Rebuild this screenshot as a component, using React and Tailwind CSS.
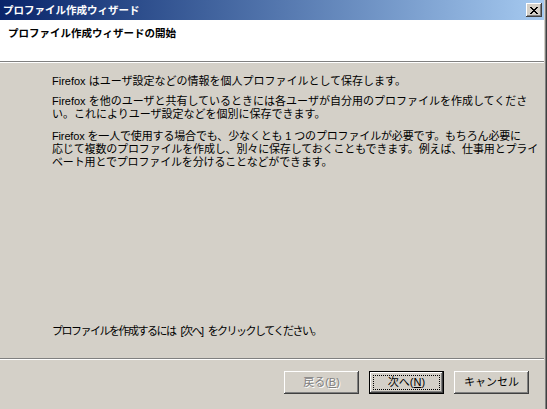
import React from 'react';

const bevel =
  'shadow-[inset_-1px_-1px_#404040,inset_1px_1px_#ffffff,inset_-2px_-2px_#808080,inset_2px_2px_#d4d0c8]';

const WizButton = ({ children, disabled, primary }) => {
  return (
    <button
      className={
        'relative w-[75px] h-[23px] bg-[#d4d0c8] text-[11px] leading-none flex items-center justify-center ' +
        (primary
          ? 'border border-black shadow-[inset_-1px_-1px_#404040,inset_1px_1px_#ffffff,inset_-2px_-2px_#808080] '
          : bevel + ' ') +
        (disabled ? 'text-[#808080] [text-shadow:1px_1px_0_#ffffff]' : 'text-black')
      }
    >
      {primary && <span className="absolute inset-[3px] border border-dotted border-black" />}
      {children}
    </button>
  );
};

const App = () => {
  return (
    <div className="w-[547px] h-[409px] flex bg-[#d4d0c8] font-[Liberation_Sans,Noto_Sans_CJK_JP,sans-serif] text-black overflow-hidden">
      <div className="w-[544px] flex flex-col">
        {/* title bar */}
        <div className="h-[20px] flex items-center justify-between pl-[3px] pr-[2px] bg-gradient-to-r from-[#0a246a] to-[#a6caf0]">
          <span className="text-white font-bold text-[10.5px] leading-none">プロファイル作成ウィザード</span>
          <div className={'w-[16px] h-[14px] bg-[#d4d0c8] flex items-center justify-center ' + bevel}>
            <svg width="8" height="7" viewBox="0 0 8 7" shapeRendering="crispEdges">
              <path d="M0 0h2v1h-2zM6 0h2v1h-2zM1 1h2v1h-2zM5 1h2v1h-2zM2 2h4v1h-4zM3 3h2v1h-2zM2 4h4v1h-4zM1 5h2v1h-2zM5 5h2v1h-2zM0 6h2v1h-2zM6 6h2v1h-2z" fill="#000" />
            </svg>
          </div>
        </div>

        {/* header */}
        <div className="h-[42px] bg-white pl-[8px] pt-[7px] border-b border-[#808080]">
          <h1 className="font-bold text-[10.5px] leading-[13px]">プロファイル作成ウィザードの開始</h1>
        </div>
        <div className="h-px bg-white" />

        {/* body */}
        <div className="flex-1 flex flex-col justify-between pl-[52px] pt-[12px] pb-[20px] text-[11px] leading-[13px] whitespace-nowrap">
          <div className="flex flex-col">
            <p className="mb-[7px]">Firefox はユーザ設定などの情報を個人プロファイルとして保存します。</p>
            <p className="mb-[9px]">
              Firefox を他のユーザと共有しているときには各ユーザが自分用のプロファイルを作成してくださ
              <br />
              い。これによりユーザ設定などを個別に保存できます。
            </p>
            <p className="tracking-[-0.15px]">
              Firefox を一人で使用する場合でも、少なくとも 1 つのプロファイルが必要です。もちろん必要に
              <br />
              応じて複数のプロファイルを作成し、別々に保存しておくこともできます。例えば、仕事用とプライ
              <br />
              ベート用とでプロファイルを分けることなどができます。
            </p>
          </div>
          <p className="tracking-[-1.5px]">
            プロファイルを作成するには<span className="mx-[5px]">[次へ]</span>をクリックしてください。
          </p>
        </div>

        {/* buttons */}
        <div className="border-t border-[#808080]">
          <div className="border-t border-white flex justify-end gap-[10px] pt-[11px] pb-[15px] pr-[15px]">
            <WizButton disabled>
              戻る(<span className="underline">B</span>)
            </WizButton>
            <WizButton primary>
              次へ(<span className="underline">N</span>)
            </WizButton>
            <WizButton>キャンセル</WizButton>
          </div>
        </div>
      </div>
      <div className="w-px bg-[#d4d0c8]" />
      <div className="w-px bg-[#808080]" />
      <div className="w-px bg-[#404040]" />
    </div>
  );
};

export default App;
